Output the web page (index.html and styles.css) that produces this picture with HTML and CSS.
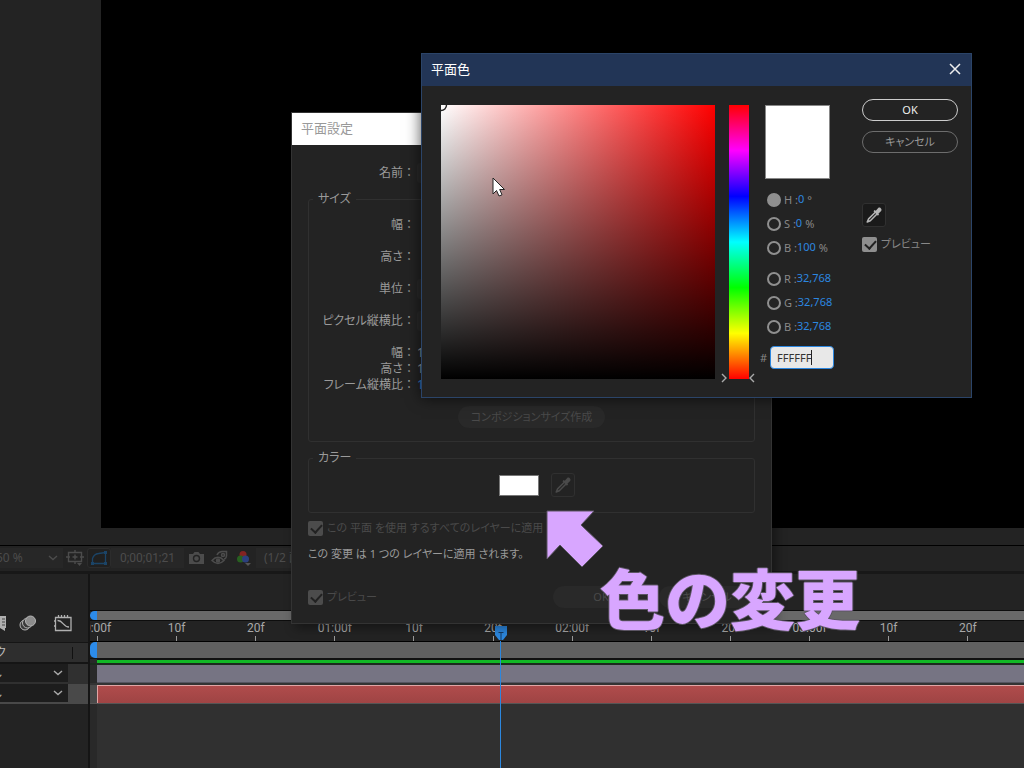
FILE: index.html
```html
<!DOCTYPE html>
<html lang="ja">
<head>
<meta charset="utf-8">
<meta name="viewport" content="width=device-width, initial-scale=1">
<title>平面設定</title>
<link rel="stylesheet" href="styles.css">
</head>
<body>
<svg class="defs" aria-hidden="true">
  <symbol id="dropper" viewBox="0 0 18 18">
    <path d="M10.300 6.200 3.600 12.900 2.200 16 5.300 14.700 12 8" fill="none" stroke="currentColor" stroke-width="1.500" stroke-linejoin="round"/>
    <path d="M8.500 5.200 9.600 4.100 10.800 4.700 13.200 1.900C14.900.6 17.500 3.100 16.200 4.900L13.500 7.400 14 8.600 12.900 9.700Z" fill="currentColor"/>
  </symbol>
  <symbol id="chevron" viewBox="0 0 10 6"><path d="M1 1 5 4.500 9 1" fill="none" stroke="currentColor" stroke-width="1.400"/></symbol>
</svg>

<div class="app">
  <main class="viewer">
    <aside class="side"></aside>
    <div class="stage"></div>
  </main>
  <div class="gutter"></div>
  <div class="toolbar">
    <div class="drop zoom"><select aria-label="拡大率"><option>50 %</option></select><svg class="chev"><use href="#chevron"/></svg></div>
    <button class="tool" aria-label="グリッド"><svg width="18" height="18" viewBox="0 0 18 18" fill="none" stroke="currentColor" stroke-width="1.400"><path d="M2.500 3.500h13v9h-13zM9 1v3M9 12v3M0 8h4M14 8h4M6.500 8h5M9 5.500v5"/><path d="M11 14h5l-2.500 3z" fill="currentColor" stroke="none"/></svg></button>
    <button class="tool mask" aria-label="マスク"><svg width="18" height="16" viewBox="0 0 18 16" fill="none" stroke="currentColor" stroke-width="1.300"><path d="M2.500 13.500V8.500Q4 4 8.500 3.500L15.500 2.500V13.500Z"/><path d="M1 12h3v3H1zM14 12h3v3h-3zM14 1h3v3h-3z" fill="currentColor" stroke="none"/></svg></button>
    <button class="time">0;00;01;21</button>
    <button class="tool" aria-label="スナップショット"><svg width="17" height="14" viewBox="0 0 17 14"><path d="M1 3h4l1.500-2h4L12 3h4v10H1z" fill="currentColor"/><circle cx="8.500" cy="7.500" r="3" fill="none" stroke="#232323" stroke-width="1.400"/></svg></button>
    <button class="tool" aria-label="スナップショットを表示"><svg width="18" height="16" viewBox="0 0 18 16" fill="none" stroke="currentColor" stroke-width="1.500"><path d="M1 10.500Q7 4 13 10.500 7 16.500 1 10.500Z"/><circle cx="7" cy="10.500" r="1.500" fill="currentColor"/><path d="M6 5Q7 2 11 1.500H15.500V6Q15 9 13 9"/><circle cx="12" cy="5" r="1.500"/></svg></button>
    <button class="tool" aria-label="チャンネル"><svg width="16" height="16" viewBox="0 0 16 16"><circle cx="7" cy="4.500" r="3.500" fill="#842322"/><circle cx="4.500" cy="9" r="3.500" fill="#286020"/><circle cx="9.500" cy="9" r="3.500" fill="#2c407e"/><path d="M9 13h6l-3 3z" fill="#555"/></svg></button>
    <div class="drop quality"><select aria-label="解像度"><option>(1/2 画質)</option></select></div>
  </div>

  <section class="timeline">
    <div class="layers">
      <div class="switches">
        <button class="sw" aria-label="フレームブレンド"><svg width="14" height="18" viewBox="0 0 14 18"><path d="M0 2h13v12H12v3L7 14H0z" fill="#b0b0b0"/><path d="M9 5h3M9 8h3M9 11h3" stroke="#444"/></svg></button>
        <button class="sw" aria-label="モーションブラー"><svg width="18" height="18" viewBox="0 0 18 18" stroke="#b5b5b5" fill="#3a3a3a"><circle cx="6" cy="11" r="5"/><circle cx="8.500" cy="9" r="5"/><circle cx="11.500" cy="7" r="5" fill="#8c8c8c"/></svg></button>
        <button class="sw" aria-label="グラフエディター"><svg width="18" height="18" viewBox="0 0 18 18" stroke="#b0b0b0" fill="none" stroke-width="1.300"><path d="M1.500 3.500h15.500v13H1.500zM4.500 1v2M7.500 1v2M10.500 1v2M13.500 1v2M0 7h2M0 12h2M3.500 6.500C9 6 9 13 15 13"/></svg></button>
      </div>
      <div class="colhead"><span>親とリンク</span><i></i></div>
      <div class="layer"><div class="drop parent"><select aria-label="レイヤー1の親"><option>なし</option></select><svg class="chev"><use href="#chevron"/></svg></div></div>
      <div class="layer selected"><div class="drop parent"><select aria-label="レイヤー2の親"><option>なし</option></select><svg class="chev"><use href="#chevron"/></svg></div></div>
    </div>
    <div class="tracks">
      <div class="lane navigator"><b class="grip"></b><div></div></div>
      <div class="ruler"><ol>
        <li class="major">0:00f</li><li>10f</li><li>20f</li><li class="major">01:00f</li><li>10f</li><li>20f</li><li class="major">02:00f</li><li>10f</li><li>20f</li><li class="major">03:00f</li><li>10f</li><li>20f</li>
      </ol></div>
      <div class="lane workarea"><b class="grip"></b><div></div></div>
      <div class="lane cache"><b></b><div></div></div>
      <div class="lane clip"><b></b><div></div></div>
      <div class="lane clip red"><b></b><div></div></div>
      <div class="lane rest"><b></b><div></div></div>
    </div>
    <div class="playhead"><svg width="13" height="15" viewBox="0 0 13 15"><path d="M0 0h12v9L8 14H4L0 9Z" fill="#2c87de"/><path d="M3.500 6.500h5M6 7v7" stroke="#153a63"/></svg></div>
  </section>

  <section class="window solid" aria-label="平面設定">
    <header>平面設定</header>
    <div class="solid-body">
      <div class="field name"><label for="nm">名前 ：</label><input id="nm"></div>
      <fieldset class="size"><legend>サイズ</legend>
        <div class="field"><span>幅 ：</span></div>
        <div class="field"><span>高さ ：</span></div>
        <div class="field"><label for="unit">単位 ：</label><select id="unit"><option></option></select></div>
        <div class="field"><label for="par">ピクセル縦横比 ：</label><select id="par"><option></option></select></div>
        <div class="facts">
          <div class="field"><span>幅 ：</span><em>1</em></div>
          <div class="field"><span>高さ ：</span><em>1</em></div>
          <div class="field"><span>フレーム縦横比 ：</span><em class="blue">1</em></div>
        </div>
        <button class="pill comp">コンポジションサイズ作成</button>
      </fieldset>
      <fieldset class="color"><legend>カラー</legend>
        <div class="color-row">
          <button class="swatch" aria-label="平面色"></button>
          <button class="pick" aria-label="スポイト"><svg width="18" height="18"><use href="#dropper"/></svg></button>
        </div>
      </fieldset>
      <label class="check"><input type="checkbox" checked>この 平面 を使用 するすべてのレイヤーに適用</label>
      <p>この 変更 は 1 つの レイヤーに適用 されます。</p>
      <div class="foot">
        <label class="check"><input type="checkbox" checked>プレビュー</label>
        <button class="pill">OK</button><button class="pill">キャンセル</button>
      </div>
    </div>
  </section>

  <section class="window picker" aria-label="平面色">
    <header>平面色<button class="close" aria-label="閉じる"><svg width="12" height="12" viewBox="0 0 12 12"><path d="M1 1 11 11M11 1 1 11" stroke="#eee" stroke-width="1.500"/></svg></button></header>
    <div class="picker-body">
      <div class="sv"><svg class="ring" width="8" height="8" viewBox="0 0 8 8"><circle cx="0" cy="0" r="5.500" fill="none" stroke="#222" stroke-width="1.400"/></svg></div>
      <div class="hue"><input type="range" min="0" max="360" value="0" aria-label="色相">
        <svg class="mark" viewBox="0 0 34 10" width="34" height="10" fill="none" stroke="#aaa" stroke-width="1.400"><path d="M1 1 5 5 1 9M33 1 29 5 33 9"/></svg></div>
      <form class="values">
        <div class="preview"></div>
        <div class="channels">
          <label><input type="radio" name="c" checked>H :<em>0</em>°</label>
          <label><input type="radio" name="c">S :<em>0</em>%</label>
          <label><input type="radio" name="c">B :<em>100</em>%</label>
        </div>
        <div class="channels">
          <label><input type="radio" name="c">R :<em>32,768</em></label>
          <label><input type="radio" name="c">G :<em>32,768</em></label>
          <label><input type="radio" name="c">B :<em>32,768</em></label>
        </div>
        <label class="hex">#<span class="hexbox"><input value="FFFFFF"><i></i></span></label>
      </form>
      <div class="actions">
        <button class="pill main">OK</button>
        <button class="pill">キャンセル</button>
        <button class="pick" aria-label="スポイト"><svg width="18" height="18"><use href="#dropper"/></svg></button>
        <label class="check"><input type="checkbox" checked>プレビュー</label>
      </div>
    </div>
    <svg class="cursor" width="14" height="20" viewBox="0 0 14 20"><path d="M1 1V17L4.500 13.500 7 19 10 17.800 7.700 12.500H12.500Z" fill="#fff" stroke="#222"/></svg>
  </section>

  <svg class="arrow" width="58" height="58" viewBox="0 0 58 58"><path d="M1 1H48L35 15 57 36 36 57 14 35 1 49Z" fill="#d8a6ff" stroke="#5c5564"/></svg>
  <div class="caption">色の変更</div>
</div>
</body>
</html>
```

FILE: styles.css
```css
* { box-sizing: border-box; }
body {
  margin: 0;
  background: #232323;
  color: #9a9a9a;
  font: 12px/16px "Noto Sans", "Noto Sans CJK JP", sans-serif;
  font-feature-settings: "palt";
}
button, input, select {
  font: inherit;
  font-feature-settings: inherit;
  color: inherit;
  margin: 0;
  padding: 0;
  border: 0;
  background: none;
  appearance: none;
}
button { display: flex; align-items: center; justify-content: center; flex: none; }
svg { display: block; flex: none; }
em { font-style: normal; }
.defs { position: absolute; width: 0; height: 0; }

.app { position: relative; display: flex; flex-direction: column; min-height: 100vh; overflow: hidden; }
.viewer { display: flex; height: 528px; background: #000; }
.side { width: 101px; background: #232323; }
.gutter { height: 18px; border-bottom: 1px solid #000; }

/* viewer toolbar */
.toolbar { display: flex; align-items: center; height: 28px; padding-bottom: 2px; border-bottom: 3px solid #181818; color: #4c4c4c; }
.drop { position: relative; overflow: hidden; }
.drop select { width: 100%; height: 100%; }
.chev { position: absolute; right: 5px; top: 50%; width: 10px; height: 6px; margin-top: -3px; }
.zoom { width: 63px; height: 20px; background: #272727; }
.zoom select { text-indent: -4px; }
.tool { width: 24px; height: 20px; }
.tool.mask { border: 1px solid #2c2c2c; border-radius: 3px; background: #202020; color: #1b4467; }
.time { width: 73px; height: 20px; background: #272727; font-family: Roboto, sans-serif; }
.quality { width: 120px; height: 20px; padding-left: 8px; background: #272727; }

/* timeline */
.timeline { position: relative; display: flex; flex: 1; }
.layers { width: 90px; padding-top: 31px; border-right: 2px solid #151515; }
.switches { display: flex; align-items: center; gap: 12px; height: 37px; margin-left: -7px; padding-bottom: 2px; }
.sw:last-child { margin-left: 5px; }
.colhead { display: flex; align-items: center; height: 22px; border-top: 1px solid #151515; border-bottom: 2px solid #151515; background: #2e2e2e; color: #bbb; }
.colhead span { display: flex; justify-content: flex-end; width: 6px; overflow: hidden; white-space: nowrap; }
.colhead i { width: 1px; height: 12px; margin-left: 66px; background: #111; }
.layer { height: 20px; padding-bottom: 2px; background: #303030; color: #aaa; }
.layer.selected { background: #494949; }
.parent { width: 68px; height: 18px; background: #1d1d1d; }
.parent select { text-indent: -20px; }

.tracks { display: flex; flex: 1; flex-direction: column; min-width: 0; padding-top: 36px; }
.lane { display: flex; }
.lane b { flex: 0 0 7px; background: #292929; }
.lane div { flex: 1; }
.lane .grip { background: #2c8bea; border-radius: 5px 0 0 5px; }
.navigator { height: 11px; border-top: 1px solid #0d0d0d; border-bottom: 1px solid #0d0d0d; }
.navigator div { background: #696969; }
.ruler { overflow: hidden; height: 21px; border-bottom: 1px solid #000; }
.ruler ol { display: flex; margin: 0 0 0 -32px; padding: 0; list-style: none; }
.ruler li {
  display: flex;
  flex: 0 0 8.19%;
  flex-direction: column;
  align-items: center;
  height: 20px;
  color: #a8a8a8;
  font: 12px/15px Roboto, sans-serif;
}
.ruler li::after { content: ""; width: 1px; height: 5px; background: #999; }
.workarea { height: 17px; border-bottom: 1px solid #111; }
.workarea div { background: #606060; }
.cache { height: 6px; border-bottom: 2px solid #1c2a1e; }
.cache div { border-top: 1px solid #111; background: #12b826; }
.clip { height: 20px; border-bottom: 2px solid #333; }
.clip div { border-bottom: 1px solid #555560; background: #767483; }
.clip.red { height: 19px; border-bottom-width: 1px; border-bottom-color: #555; }
.clip.red b { background: #494949; }
.clip.red div { border: solid #e0a5a5; border-width: 1px 0 0 1px; background: linear-gradient(#b04c4c, #9f4444); }
.rest { flex: 1; }
.rest div { background: #303030; }
.playhead { position: absolute; left: 495px; top: 52px; bottom: 0; width: 13px; }
.playhead::before { content: ""; position: absolute; left: 5px; top: 15px; bottom: 0; width: 1px; background: #2c87de; }

/* windows */
.window { position: absolute; background: #232323; }
.window header { display: flex; align-items: center; justify-content: space-between; height: 32px; padding: 0 8px 2px 9px; font-size: 13px; }
.pill { width: 96px; height: 22px; border-radius: 11px; font-size: 11px; }
.pick { width: 24px; height: 24px; border: 1px solid #303030; border-radius: 3px; }
.check { display: flex; align-items: center; gap: 4px; font-size: 11px; white-space: nowrap; }
.check input { width: 15px; height: 15px; border-radius: 2px; background: #8f8f8f; }
.check input::after { content: ""; display: block; width: 5px; height: 9px; margin: 1px 0 0 5px; border: solid #222; border-width: 0 2px 2px 0; transform: rotate(42deg); }

.solid { left: 291px; top: 112px; width: 481px; border: 1px solid #333; box-shadow: 4px 4px 10px #0006; }
.solid header { background: #fff; color: #999; }
.solid-body { display: flex; flex-direction: column; padding: 20px 16px 15px; }
.field { display: flex; align-items: center; gap: 5px; height: 16px; }
.field > :first-child { width: 104px; text-align: right; white-space: nowrap; }
.field input, .field select { width: 200px; height: 20px; border-radius: 3px; background: #292929; }
fieldset { min-width: 0; margin: 0; padding: 0; border: 1px solid #303030; border-radius: 3px; }
legend { margin-left: 4px; padding: 0 5px; }
.size { display: flex; flex-direction: column; margin-top: 10px; height: 251px; }
.size > .field { margin-bottom: 16px; }
.size > legend + .field { margin-top: 10px; }
.size .field > :first-child { width: 103px; }
.blue { color: #2c7fd0; }
.comp { width: 147px; margin: 13px 0 0 149px; }
.solid .pill { background: #292929; color: #4a4a4a; }
.color { height: 63px; margin-top: 8px; }
.color-row { display: flex; align-items: center; gap: 12px; margin: 7px 0 0 190px; }
.color .swatch { width: 40px; height: 21px; border: 1px solid #777; background: #fff; }
.color .pick { color: #4a4a4a; }
.solid .check { margin-top: 7px; color: #4a4a4a; }
.solid .check input { background: #4c4c4c; }
.solid p { margin: 10px 0 0; font-size: 11px; white-space: nowrap; }
.foot { display: flex; align-items: center; gap: 10px; margin-top: 24px; }
.foot .check { flex: 1; margin: 0; }

.picker { left: 421px; top: 53px; width: 551px; border: 1px solid #2b4468; box-shadow: 0 0 14px #000a; }
.picker header { background: #223556; color: #fff; }
.picker .close { width: 16px; height: 16px; }
.picker-body { display: flex; height: 311px; padding: 19px 13px 0 19px; }
.sv { position: relative; width: 274px; height: 274px; background: linear-gradient(transparent, #000), linear-gradient(90deg, #fff, #f00); }
.ring { position: absolute; left: 0; top: 0; }
.hue { position: relative; width: 20px; margin-left: 14px; }
.hue input {
  display: block;
  width: 20px;
  height: 274px;
  writing-mode: vertical-lr;
  background: linear-gradient(#f00, #f0f, #00f, #0ff, #0f0, #ff0, #f00);
}
.hue input::-webkit-slider-thumb { appearance: none; width: 20px; height: 1px; background: none; }
.mark { position: absolute; left: -8px; top: 268px; }
.values { width: 83px; margin-left: 11px; font-size: 11px; }
.preview { width: 65px; height: 74px; margin-left: 5px; border: 1px solid #888; background: #fff; }
.channels { margin: 9px 0 0 7px; color: #888; }
.channels + .channels { margin-top: 7px; }
.channels label { display: flex; align-items: center; height: 24px; white-space: nowrap; }
.channels input { width: 14px; height: 14px; margin-right: 3px; border: 2px solid #8f8f8f; border-radius: 50%; }
.channels input:checked { background: #8f8f8f; }
.channels em { margin: 0 3px 2px 0; color: #2c87e0; }
.hex { display: flex; align-items: center; gap: 3px; margin-top: 7px; color: #888; }
.hexbox { position: relative; }
.hexbox input { display: block; width: 64px; height: 23px; padding-left: 6px; border: 1px solid #2c87e0; border-radius: 4px; background: #e8e8e8; color: #333; }
.hexbox i { position: absolute; left: 41px; top: 4px; width: 1px; height: 15px; background: #222; }
.actions { width: 96px; margin: -6px 0 0 auto; }
.actions .pill { border: 1px solid #6d6d6d; margin-bottom: 10px; color: #999; }
.actions .main { border: 1px solid #ccc; color: #eee; }
.actions .pick { margin-top: 50px; background: #1a1a1a; color: #b5b5b5; }
.actions .check { margin-top: 9px; color: #888; }
.cursor { position: absolute; left: 70px; top: 123px; }

/* annotation */
.arrow { position: absolute; left: 546px; top: 510px; }
.caption {
  position: absolute;
  left: 600px;
  top: 556px;
  color: #d8a6ff;
  font: 900 65px/80px "Noto Sans CJK JP", sans-serif;
  font-feature-settings: normal;
  white-space: nowrap;
  text-shadow: 1px 0 #5c5564, -1px 0 #5c5564, 0 1px #5c5564, 0 -1px #5c5564;
}
```
